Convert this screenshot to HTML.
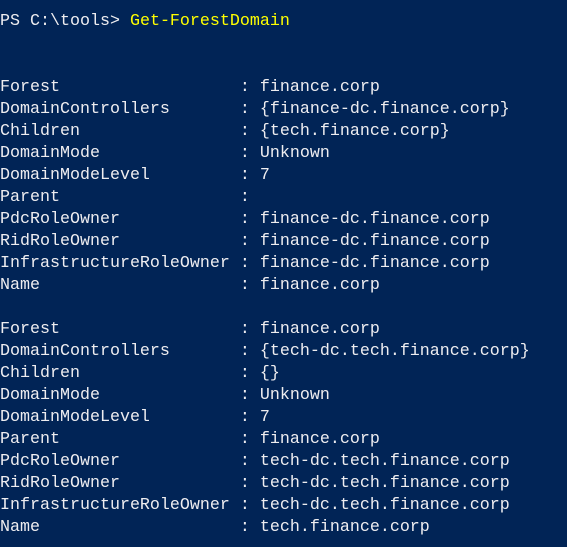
<!DOCTYPE html>
<html><head><style>
html,body{margin:0;padding:0;}
body{width:567px;height:547px;background:#012456;overflow:hidden;}
pre{margin:0;position:absolute;left:0;top:11px;font-family:"Liberation Mono",monospace;font-size:16.67px;line-height:22px;color:#eeedf0;}
.y{color:#ffff00;}
</style></head><body>
<pre>PS C:\tools&gt; <span class="y">Get-ForestDomain</span>


Forest                  : finance.corp
DomainControllers       : {finance-dc.finance.corp}
Children                : {tech.finance.corp}
DomainMode              : Unknown
DomainModeLevel         : 7
Parent                  :
PdcRoleOwner            : finance-dc.finance.corp
RidRoleOwner            : finance-dc.finance.corp
InfrastructureRoleOwner : finance-dc.finance.corp
Name                    : finance.corp

Forest                  : finance.corp
DomainControllers       : {tech-dc.tech.finance.corp}
Children                : {}
DomainMode              : Unknown
DomainModeLevel         : 7
Parent                  : finance.corp
PdcRoleOwner            : tech-dc.tech.finance.corp
RidRoleOwner            : tech-dc.tech.finance.corp
InfrastructureRoleOwner : tech-dc.tech.finance.corp
Name                    : tech.finance.corp</pre>
</body></html>
